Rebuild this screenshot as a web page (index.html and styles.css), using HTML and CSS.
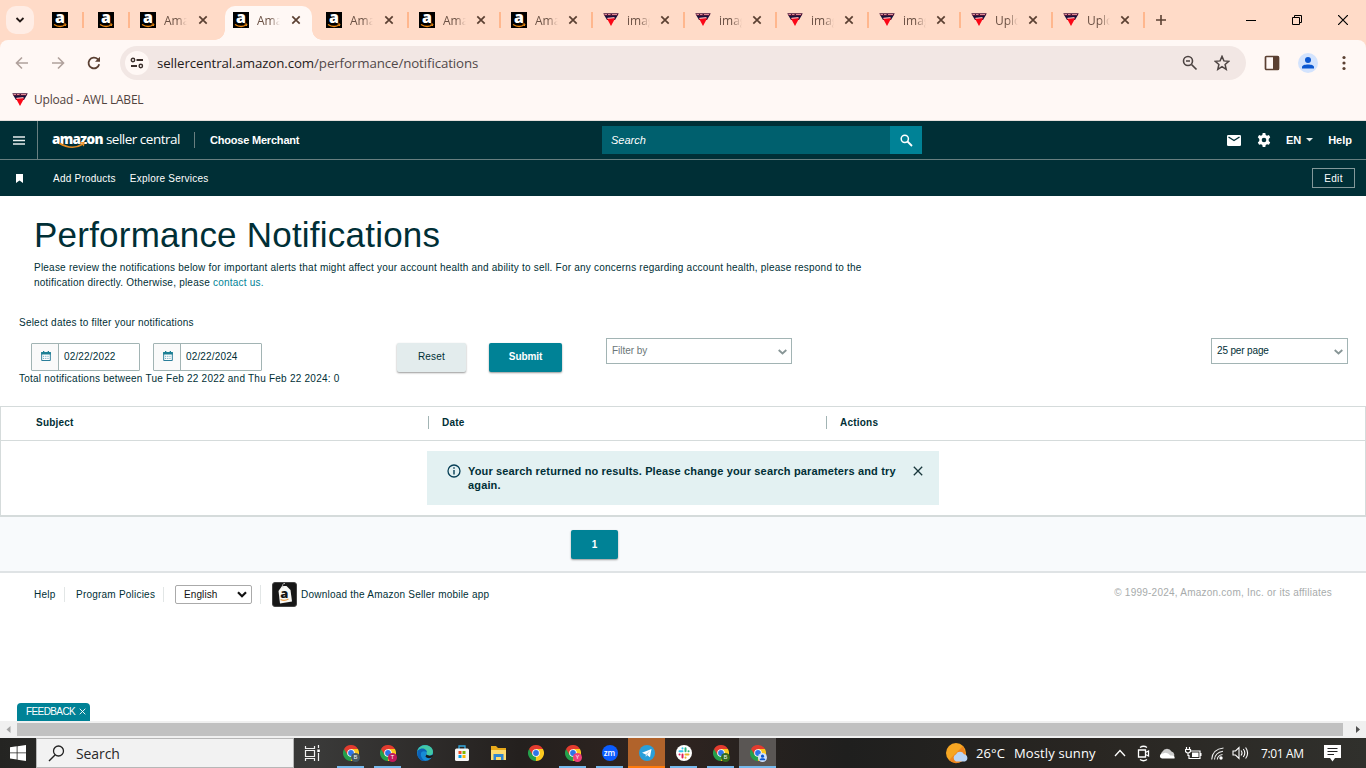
FILE: index.html
```html
<!DOCTYPE html>
<html lang="en">
<head>
<meta charset="utf-8">
<title>Performance Notifications</title>
<link rel="stylesheet" href="styles.css">
</head>
<body>
<svg class="defs" width="0" height="0" aria-hidden="true">
  <symbol id="amz" viewBox="0 0 16 16" overflow="visible"><rect width="16" height="16" fill="#000"/><text x="8" y="11.2" text-anchor="middle" font-family="Open Sans, sans-serif" font-weight="800" font-size="16" fill="#fff">a</text><path d="M2 12.5q6 3.800 11.500.3" fill="none" stroke="#f08a10" stroke-width="1.300"/><path d="M11.500 12h2.500l-.6 2" fill="none" stroke="#f08a10"/></symbol>
  <symbol id="awl" viewBox="0 0 16 16"><path d="M.3 1.300h15.400L14.500 4h-13z" fill="#4b1538"/><path d="M1.500 2.500h2.500M5 2.500h2.500M9 2.500h5" stroke="#e08a96" stroke-width="1"/><path d="M1.700 4h12.600L12 8H4z" fill="#17123c"/><path d="M3.800 6.200h8.400L8 14z" fill="#fb0717"/><path d="M4.500 6.400l7-.8" stroke="#ffb0b2" stroke-width="1.300"/></symbol>
  <symbol id="x" viewBox="0 0 10 10"><path d="M1.300 1.300l7.400 7.400M8.700 1.300L1.300 8.700" fill="none" stroke="currentColor" stroke-width="1.700"/></symbol>
  <symbol id="chrome" viewBox="0 0 16 16"><path d="M8 8L1.070 4A8 8 0 0 0 8 16l3.500-6z" fill="#24a04b"/><path d="M8 8l-.1 8A8 8 0 0 0 14.930 4H8z" fill="#fcc91f"/><path d="M1.070 4A8 8 0 0 1 14.930 4H8L4.600 10z" fill="#e33b2e"/><circle cx="8" cy="8" r="3.800" fill="#fff"/><circle cx="8" cy="8" r="2.900" fill="#2d75e8"/></symbol>
  <symbol id="cal" viewBox="0 0 10 10"><path d="M.7 1.500h8.600v8H.7z" fill="#fff" stroke="#2b7e9a"/><path d="M.2 1h9.600v2.600H.2zM2 0h1.300v2H2zM6.700 0H8v2H6.700z" fill="#1d8095"/><path d="M2 5.300h6.500M2 7.400h6.500" stroke="#6fa9bf" stroke-dasharray="1.200 1"/></symbol>
  <symbol id="chev" viewBox="0 0 9 6"><path d="M.7 1l3.800 3.500L8.300 1" fill="none" stroke="#879596" stroke-width="1.800"/></symbol>
</svg>

<header class="tabs">
  <div class="tab-list-btn"><svg width="10" height="6" viewBox="0 0 10 6"><path d="M1.500 1L5 4.500 8.500 1" fill="none" stroke="#241a17" stroke-width="1.800"/></svg></div>
  <div class="tab pinned"><svg class="fav"><use href="#amz"/></svg></div>
  <div class="tab pinned second"><svg class="fav"><use href="#amz"/></svg></div>
  <div class="tab wide plain"><svg class="fav"><use href="#amz"/></svg><span>Ama</span><svg class="close"><use href="#x"/></svg></div>
  <div class="tab wide plain active"><svg class="fav"><use href="#amz"/></svg><span>Ama</span><svg class="close"><use href="#x"/></svg></div>
  <div class="tab wide"><svg class="fav"><use href="#amz"/></svg><span>Ama</span><svg class="close"><use href="#x"/></svg></div>
  <div class="tab"><svg class="fav"><use href="#amz"/></svg><span>Ama</span><svg class="close"><use href="#x"/></svg></div>
  <div class="tab"><svg class="fav"><use href="#amz"/></svg><span>Ama</span><svg class="close"><use href="#x"/></svg></div>
  <div class="tab"><svg class="fav"><use href="#awl"/></svg><span>imag</span><svg class="close"><use href="#x"/></svg></div>
  <div class="tab"><svg class="fav"><use href="#awl"/></svg><span>imag</span><svg class="close"><use href="#x"/></svg></div>
  <div class="tab"><svg class="fav"><use href="#awl"/></svg><span>imag</span><svg class="close"><use href="#x"/></svg></div>
  <div class="tab"><svg class="fav"><use href="#awl"/></svg><span>imag</span><svg class="close"><use href="#x"/></svg></div>
  <div class="tab"><svg class="fav"><use href="#awl"/></svg><span>Uplo</span><svg class="close"><use href="#x"/></svg></div>
  <div class="tab"><svg class="fav"><use href="#awl"/></svg><span>Uplo</span><svg class="close"><use href="#x"/></svg></div>
  <svg class="plus" width="12" height="12" viewBox="0 0 12 12"><path d="M6 1v10M1 6h10" stroke="#5b4032" stroke-width="1.600"/></svg>
  <div class="win">
    <svg width="10" height="10"><path d="M0 5.500h10" stroke="#000"/></svg>
    <svg width="10" height="10"><path d="M.5 2.500h7v7h-7zM2.500 2.500v-2h7v7h-2" fill="none" stroke="#000"/></svg>
    <svg width="10" height="10"><path d="M0 0l10 10M10 0L0 10" stroke="#000" stroke-width="1.200"/></svg>
  </div>
</header>

<div class="toolbar-back"><div class="toolbar">
  <svg class="nav-ic" width="14" height="14" viewBox="0 0 14 14"><path d="M13 7H2M7 1.500L1.500 7 7 12.500" fill="none" stroke="#b0a19c" stroke-width="1.600"/></svg>
  <svg class="nav-ic" width="14" height="14" viewBox="0 0 14 14"><path d="M1 7h11M7 1.500L12.500 7 7 12.500" fill="none" stroke="#b0a19c" stroke-width="1.600"/></svg>
  <svg class="nav-ic" width="14" height="14" viewBox="0 0 14 14"><path d="M12.200 8.300A5.400 5.400 0 1 1 10.800 3.200L12 4.500" fill="none" stroke="#5b4032" stroke-width="1.800"/><path d="M13 .8v5H8z" fill="#5b4032"/></svg>
  <div class="omnibox">
    <div class="site-info"><svg width="14" height="12" viewBox="0 0 14 12"><path d="M6.500 3H13M1 9h6" stroke="#3b302c" stroke-width="1.800"/><circle cx="3" cy="3" r="1.700" fill="none" stroke="#3b302c" stroke-width="1.400"/><circle cx="10.800" cy="9" r="1.700" fill="none" stroke="#3b302c" stroke-width="1.400"/></svg></div>
    <p class="url"><b>sellercentral.amazon.com</b>/performance/notifications</p>
    <svg class="zoom" width="16" height="16" viewBox="0 0 16 16"><circle cx="6" cy="6" r="4.500" fill="none" stroke="#4d4442" stroke-width="1.600"/><path d="M9.500 9.500l5 5M4 6h4" stroke="#4d4442" stroke-width="1.700"/></svg>
    <svg width="16" height="16" viewBox="0 0 16 16"><path d="M8 1.400l1.900 4.500 4.900.4-3.700 3.200 1.100 4.800L8 11.700l-4.200 2.600 1.100-4.800L1.200 6.300l4.900-.4z" fill="none" stroke="#4d4442" stroke-width="1.500"/></svg>
  </div>
  <svg class="panel" width="16" height="16" viewBox="0 0 16 16"><rect x="1.500" y="1.500" width="13" height="13" rx="1" fill="#fff8f6" stroke="#5b4032" stroke-width="1.700"/><path d="M9 1h5.500v14H9z" fill="#5b4032"/></svg>
  <svg class="avatar" width="20" height="20" viewBox="0 0 20 20"><circle cx="10" cy="10" r="10" fill="#d3e3fd"/><circle cx="10" cy="7" r="3" fill="#0b57d0"/><path d="M4 15.500v-1.600c0-3.300 12-3.300 12 0v1.600z" fill="#0b57d0"/></svg>
  <svg width="4" height="16" viewBox="0 0 4 16"><g fill="#5b4032"><circle cx="2" cy="2.500" r="1.600"/><circle cx="2" cy="8" r="1.600"/><circle cx="2" cy="13.500" r="1.600"/></g></svg>
</div></div>
<div class="bookmarks"><svg class="fav"><use href="#awl"/></svg><span>Upload - AWL LABEL</span></div>

<nav class="sc-top">
  <div class="burger"><svg width="12" height="9" viewBox="0 0 12 9"><path d="M0 1h12M0 4.500h12M0 8h12" stroke="#e8eeee" stroke-width="1.600"/></svg></div>
  <div class="brand"><b>amazon</b><span>seller central</span><svg class="smile" width="30" height="8" viewBox="0 0 30 8"><path d="M1 1q13 8 24 1" fill="none" stroke="#e88b21" stroke-width="1.500"/><path d="M22 .8l4-.2-.6 3.600" fill="none" stroke="#e88b21" stroke-width="1.200"/></svg></div>
  <div class="merchant">Choose Merchant</div>
  <div class="sc-search"><em>Search</em><div class="go"><svg width="13" height="13" viewBox="0 0 13 13"><circle cx="4.800" cy="4.800" r="3.600" fill="none" stroke="#fff" stroke-width="1.500"/><path d="M7.500 7.500l4.500 4.500" stroke="#fff" stroke-width="1.800"/></svg></div></div>
  <div class="sc-right">
    <svg width="14" height="11" viewBox="0 0 14 11"><rect width="14" height="11" rx="1.300" fill="#fff"/><path d="M1.500 2L7 5.500 12.500 2" fill="none" stroke="#002f36" stroke-width="1.400"/></svg>
    <svg class="gear" width="14" height="14" viewBox="0 0 14 14"><path d="M5.700 0h2.600l.4 2 1.300.7 1.900-.7 1.300 2.300L11.700 6v2l1.500 1.500-1.300 2.300-1.900-.6-1.300.8-.4 2H5.700l-.4-2-1.300-.8-1.900.6L.8 9.500 2.300 8V6L.8 4.300 2.100 2l1.900.7L5.300 2z" fill="#fff"/><circle cx="7" cy="7" r="2.300" fill="#002f36"/></svg>
    <span class="lang">EN</span><svg class="caret" width="7" height="4"><path d="M0 0h7L3.500 3.500z" fill="#e8eeee"/></svg>
    <span class="help">Help</span>
  </div>
</nav>
<nav class="sc-sub">
  <svg width="7" height="9" viewBox="0 0 7 9"><path d="M0 0h7v9L3.500 6.500 0 9z" fill="#fff"/></svg>
  <a class="add">Add Products</a><a class="explore">Explore Services</a>
  <button class="edit">Edit</button>
</nav>

<main>
  <section class="intro">
    <h1>Performance Notifications</h1>
    <p>Please review the notifications below for important alerts that might affect your account health and ability to sell. For any concerns regarding account health, please respond to the<br>notification directly. Otherwise, please <a>contact us.</a></p>
  </section>
  <section class="filters">
    <p class="prompt">Select dates to filter your notifications</p>
    <div class="controls">
      <div class="date"><i><svg width="10" height="10"><use href="#cal"/></svg></i><span>02/22/2022</span></div>
      <div class="date"><i><svg width="10" height="10"><use href="#cal"/></svg></i><span>02/22/2024</span></div>
      <button class="btn reset">Reset</button>
      <button class="btn submit">Submit</button>
      <div class="drop filter"><span>Filter by</span><svg width="9" height="6"><use href="#chev"/></svg></div>
      <div class="drop per"><span>25 per page</span><svg width="9" height="6"><use href="#chev"/></svg></div>
    </div>
    <p class="total">Total notifications between Tue Feb 22 2022 and Thu Feb 22 2024: 0</p>
  </section>
  <section class="table">
    <div class="thead"><div>Subject</div><div>Date</div><div>Actions</div></div>
    <div class="tbody">
      <div class="alert">
        <svg width="14" height="14" viewBox="0 0 14 14"><circle cx="7" cy="7" r="6" fill="none" stroke="#073f56" stroke-width="1.300"/><path d="M7 6v4.500M7 3.300v1.500" stroke="#073f56" stroke-width="1.400"/></svg>
        <p>Your search returned no results. Please change your search parameters and try<br>again.</p>
        <svg class="dismiss" width="10" height="10" viewBox="0 0 10 10"><path d="M.8.8l8.400 8.400M9.200.8L.8 9.200" stroke="#19373c" stroke-width="1.300"/></svg>
      </div>
    </div>
  </section>
  <section class="pager"><button>1</button></section>
  <footer>
    <a class="f-help">Help</a><a class="f-pol">Program Policies</a>
    <div class="f-lang"><div class="select"><span>English</span><svg width="10" height="7" viewBox="0 0 10 7"><path d="M1 1.200l4 4 4-4" fill="none" stroke="#111" stroke-width="2.200"/></svg></div></div>
    <svg class="app" width="25" height="25" viewBox="0 0 25 25"><rect x=".5" y=".5" width="24" height="24" rx="2.500" fill="#171717" stroke="#444"/><path d="M6.500 9l3.500-5h4.500l4 4 1.500 11.500-12 2z" fill="#f8f8f5"/><path d="M11 5.500q-1.500-4 2-4" fill="none" stroke="#bbb"/><text x="12.500" y="16" text-anchor="middle" font-family="Open Sans, sans-serif" font-weight="800" font-size="13" fill="#161616">a</text><path d="M8.500 17.500q4 2 8-.5" fill="none" stroke="#eda04a" stroke-width="1.200"/></svg>
    <a class="download">Download the Amazon Seller mobile app</a>
    <small>© 1999-2024, Amazon.com, Inc. or its affiliates</small>
  </footer>
  <div class="feedback">FEEDBACK <svg width="7" height="7" viewBox="0 0 10 10"><path d="M1 1l8 8M9 1L1 9" stroke="#fff" stroke-width="1.300"/></svg></div>
</main>
<div class="scroll"><svg width="17" height="17"><path d="M10.500 5v7L6.500 8.500z" fill="#a3a3a3"/></svg><div></div><svg width="23" height="17"><path d="M13 5v7l4-3.500z" fill="#505050"/></svg></div>

<div class="taskbar">
  <div class="start"><svg width="16" height="16" viewBox="0 0 16 16"><path d="M0 2.300L6.700 1.300v6.200H0zM7.500 1.200L16 0v7.500H7.500zM0 8.300h6.700v6.200L0 13.600zM7.500 8.300H16V16l-8.500-1.300z" fill="#fff"/></svg></div>
  <div class="tsearch"><svg width="17" height="17" viewBox="0 0 17 17"><circle cx="10.500" cy="6" r="5" fill="none" stroke="#222" stroke-width="1.300"/><path d="M7 10L1 16" stroke="#222" stroke-width="1.400"/></svg><span>Search</span></div>
  <div class="apps">
    <div class="ap first"><svg width="17" height="17" viewBox="0 0 17 17"><path d="M1.500 1v2.500h9V1M1.500 16v-2.500h9V16M1.500 5.500h9v6h-9zM14.500 0v3M14.500 8v8" fill="none" stroke="#f1f1f1" stroke-width="1.200"/><path d="M13.300 4.500h2.500V7h-2.500z" fill="#fff"/></svg></div>
    <div class="ap run"><svg class="ch"><use href="#chrome"/></svg><i class="badge slate">B</i></div>
    <div class="ap run"><svg class="ch"><use href="#chrome"/></svg><i class="badge crimson">T</i></div>
    <div class="ap"><svg width="16" height="16" viewBox="0 0 16 16"><circle cx="8" cy="8" r="8" fill="#168bd6"/><path d="M.4 6C2-2 16-1.500 16 7c0 4-5 4-6.500 2.600C11 6 5 2 .4 6z" fill="#42c8a6"/><path d="M1 5.500c4-4 9-1 9 2C7 5 3 6 4 11c1 3 3 4.500 5 5C3 17-1 11 1 5.500z" fill="#0c62b7"/><path d="M9.500 9.600C11 11 15 11 15.500 9.500L16 11c-2 3-6 2.500-7.500.5z" fill="#191919"/></svg></div>
    <div class="ap"><svg width="16" height="16" viewBox="0 0 16 16"><path d="M5 4V1h6v3" fill="none" stroke="#35a9e0" stroke-width="1.300"/><rect x="1" y="3.500" width="14" height="12.500" rx="1.500" fill="#f7f7f7"/><path d="M4.500 6h3v3h-3z" fill="#f04e23"/><path d="M8.500 6h3v3h-3z" fill="#7db700"/><path d="M4.500 10h3v3h-3z" fill="#00a1ed"/><path d="M8.500 10h3v3h-3z" fill="#fdb900"/></svg></div>
    <div class="ap"><svg width="17" height="16" viewBox="0 0 17 16"><path d="M1 1h5l2 2h8v12H1z" fill="#e8a91b"/><path d="M1 5h15v10H1z" fill="#fddc70"/><path d="M3.500 15V9h10v6h-2.500v-3H6v3z" fill="#2f86d1"/></svg></div>
    <div class="ap"><svg class="ch"><use href="#chrome"/></svg></div>
    <div class="ap run"><svg class="ch"><use href="#chrome"/></svg><i class="badge pink">Y</i></div>
    <div class="ap run"><span class="zm">zm</span></div>
    <div class="ap run alerting"><svg width="16" height="16" viewBox="0 0 16 16"><circle cx="8" cy="8" r="8" fill="#2a9fd9"/><path d="M3 7.800l9.500-3.800-1.500 8.300-3-2.200L6.800 12V9.400z" fill="#fff"/><path d="M6.800 9.400L11 5.500 8 10" fill="#a9c9dd"/></svg></div>
    <div class="ap run"><svg width="16" height="16" viewBox="0 0 16 16"><circle cx="8" cy="8" r="8" fill="#fff"/><g fill="none" stroke-width="2" stroke-linecap="round"><path d="M3.500 6.300h3M6.500 3.300v.2" stroke="#36c5f0"/><path d="M9.500 3.300v3M12.500 6.300h.1" stroke="#2eb67d"/><path d="M9.500 9.500h3M9.500 12.600v.1" stroke="#ecb22e"/><path d="M6.500 9.500v3M3.500 9.500h.1" stroke="#e01e5a"/></g></svg></div>
    <div class="ap run"><svg class="ch"><use href="#chrome"/></svg><i class="badge green">B</i></div>
    <div class="ap run current"><svg class="ch"><use href="#chrome"/></svg><i class="badge pale"><svg width="9" height="9" viewBox="0 0 20 20"><circle cx="10" cy="7" r="3.500" fill="#0b57d0"/><path d="M4 16v-2c0-3.300 12-3.300 12 0v2z" fill="#0b57d0"/></svg></i></div>
  </div>
  <div class="weather"><svg width="23" height="21" viewBox="0 0 23 21"><circle cx="10" cy="10" r="10" fill="#f6a623"/><path d="M3 17A10 10 0 0 0 20 12L17 3z" fill="#ee851f"/><path d="M10 18.500a4 4 0 0 1 0-7.300 4.500 4.500 0 0 1 8 0 3.800 3.800 0 0 1 1 7.300z" fill="#b9d4f6"/></svg><span class="temp">26°C</span><span class="cond">Mostly sunny</span></div>
  <div class="tray">
    <svg width="12" height="8" viewBox="0 0 12 8"><path d="M1 7l5-5.500L11 7" fill="none" stroke="#fff" stroke-width="1.300"/></svg>
    <svg class="meet" width="13" height="17" viewBox="0 0 13 17"><path d="M3 2.500q3.500-2.500 7 0M3 14.500q3.500 2.500 7 0M1.500 5h7v7h-7zM8.500 7.500L11.500 6v5l-3-1.500" fill="none" stroke="#fff" stroke-width="1.300"/></svg>
    <svg width="17" height="11" viewBox="0 0 17 11"><path d="M4 9.500a3.500 3.500 0 0 1-.5-6 5 5 0 0 1 9 0A3.500 3.500 0 0 1 13.500 10z" fill="#ccc"/><path d="M3 10.500a2.500 2.500 0 0 1 1-5q4-2 7.500 2 5-.5 4 3z" fill="#fff"/></svg>
    <svg width="17" height="13" viewBox="0 0 17 13"><path d="M6 4h9v7.500H4V8M1.500 0v2.500M4.500 0v2.500M.5 2.500h5v2q-2.500 3-5 0zM3 6v3" fill="none" stroke="#fff" stroke-width="1.200"/><path d="M7 5.500h6.500V10H7zM15 6h1.500v3H15z" fill="#fff"/></svg>
    <svg width="13" height="13" viewBox="0 0 13 13"><g fill="none" stroke="#eee" stroke-width="1.100"><path d="M.7 12.500Q1.500 2 12.500 1"/><path d="M3.500 12.500Q4 5.500 12 4.200"/><path d="M6.300 12.500Q6.500 8.500 11.500 7.500"/></g><circle cx="10" cy="11" r="1.700" fill="#fff"/></svg>
    <svg class="vol" width="17" height="14" viewBox="0 0 17 14"><path d="M1 5h2.500L7 1.500v11L3.500 9H1zM9 4.500q2 2.500 0 5M11.300 3q3 4 0 8M13.600 1.500q4 5.500 0 11" fill="none" stroke="#fff" stroke-width="1.100"/></svg>
  </div>
  <time>7:01 AM</time>
  <svg class="note" width="17" height="17" viewBox="0 0 17 17"><path d="M0 0h17v13h-6l-2.500 3.500L6 13H0z" fill="#fff"/><path d="M3.500 3.500h10M3.500 6.500h10M3.500 9.500h6.500" stroke="#222"/></svg>
</div>
</body>
</html>
```
FILE: styles.css
```css
* { box-sizing: border-box; }
body {
  margin: 0; width: 1366px; height: 768px; overflow: hidden;
  display: flex; flex-direction: column;
  font-family: "Liberation Sans", Arial, sans-serif; font-size: 10px; color: #002f36; background: #fff;
}
p, h1 { margin: 0; }
svg { display: block; flex: none; }
button { font: inherit; padding: 0; }
.defs { position: absolute; }
.fav { width: 16px; height: 16px; }

/* Browser tab strip */
.tabs { height: 40px; flex: none; display: flex; background: #ffdbc8; font: 12px "Open Sans", sans-serif; color: #6b5144; }
.tab-list-btn { width: 28px; height: 28px; margin: 6px 7px 0 6px; border-radius: 10px; background: #ffede5; display: flex; align-items: center; justify-content: center; }
.tab { position: relative; width: 92px; height: 40px; padding-left: 11px; display: flex; align-items: center; flex: none; }
.tab::after { content: ""; position: absolute; right: -1px; top: 12px; width: 2px; height: 16px; background: #ffb78e; }
.tab.wide { width: 93px; }
.tab.plain::after { display: none; }
.tab.pinned { width: 42px; }
.tab.pinned.second { width: 46px; padding-left: 15px; }
.tab span { width: 23px; margin-left: 8px; white-space: nowrap; -webkit-mask-image: linear-gradient(90deg, #000 55%, transparent); mask-image: linear-gradient(90deg, #000 55%, transparent); }
.close { width: 10px; height: 10px; margin-left: 10px; color: #5b4032; }
.wide .close { margin-left: 11px; }
.active { z-index: 1; }
.active::before { content: ""; position: absolute; z-index: -1; left: 3px; top: 6px; width: 87px; height: 34px; border-radius: 10px 10px 0 0; background: #fff8f5; }
.tab.active::after { display: block; z-index: -2; left: -7px; right: auto; top: 30px; width: 107px; height: 10px; background: radial-gradient(circle at 0 0, transparent 9.5px, #fff8f5 10px) 0 0 / 10px 10px no-repeat, radial-gradient(circle at 100% 0, transparent 9.5px, #fff8f5 10px) 100% 0 / 10px 10px no-repeat; }
.plus { margin: 14px 0 0 11px; }
.win { margin: 15px 18px 0 auto; display: flex; gap: 36px; }

/* Address bar */
.toolbar-back { height: 46px; flex: none; background: #ffdbc8; }
.toolbar { height: 46px; display: flex; align-items: center; background: #fff8f5; padding-left: 15px; border-radius: 8px 8px 0 0; }
.nav-ic { margin-right: 22px; }
.omnibox { width: 1126px; height: 34px; margin-left: -3px; border-radius: 17px; background: #f2e7e4; display: flex; align-items: center; padding: 0 16px 0 5px; }
.site-info { width: 24px; height: 24px; border-radius: 50%; background: #fff8f5; display: flex; align-items: center; justify-content: center; }
.url { font: 13.300px "Open Sans", sans-serif; color: #51494a; margin-left: 8px; letter-spacing: -.1px; }
.url b { font-weight: 400; color: #1f1a19; }
.zoom { margin: 0 16px 0 auto; }
.panel { margin: 0 18px; }
.avatar { margin-right: 24px; }
.bookmarks { height: 35px; flex: none; background: #fff8f5; border-bottom: 1px solid #e5dedb; display: flex; align-items: center; padding: 0 0 7px 12px; gap: 6px; font: 12px "Open Sans", sans-serif; color: #51433e; }
.bookmarks span { letter-spacing: -.2px; }

/* Seller header */
.sc-top { height: 39px; flex: none; background: #002f36; border-bottom: 1px solid #687f80; color: #fff; display: flex; align-items: center; font-weight: 700; font-size: 11px; }
.burger { width: 38px; height: 38px; border-right: 1px solid #687f80; display: flex; align-items: center; justify-content: center; }
.brand { position: relative; width: 157px; height: 16px; padding: 0 0 3px 14px; border-right: 1px solid #687f80; display: flex; align-items: center; gap: 3px; font-family: "Open Sans", sans-serif; font-size: 13.500px; white-space: nowrap; }
.brand b { letter-spacing: -.65px; }
.brand span { font-weight: 400; letter-spacing: -.5px; }
.smile { position: absolute; left: 20px; top: 10px; }
.merchant { width: 407px; padding-left: 15px; letter-spacing: -.2px; }
.sc-search { width: 320px; height: 28px; background: #00606e; display: flex; align-items: center; justify-content: space-between; padding-left: 9px; }
.sc-search em { font-weight: 400; font-size: 11px; }
.go { width: 32px; height: 28px; background: #008296; display: flex; align-items: center; justify-content: center; }
.sc-right { margin-left: auto; padding-right: 14px; display: flex; align-items: center; }
.gear { margin: 0 15px 0 16px; }
.caret { margin: 0 15px 0 5px; }
.sc-sub { height: 36px; flex: none; background: #002f36; color: #fff; display: flex; align-items: center; padding: 0 11px 0 16px; letter-spacing: .23px; }
.add { margin-left: 30px; }
.explore { margin-left: 14px; }
.edit { width: 43px; height: 20px; margin-left: auto; background: none; border: 1px solid #83989a; color: #fff; letter-spacing: .3px; }

/* Page content */
main { position: relative; flex: none; height: 525px; letter-spacing: .22px; }
.intro { height: 120px; padding: 18px 0 0 34px; }
h1 { font-size: 35px; line-height: 42px; font-weight: 400; letter-spacing: .22px; }
.intro p { line-height: 15px; margin-top: 4px; white-space: nowrap; }
.intro p a { color: #008296; }
.filters { height: 90px; padding-left: 19px; }
.prompt { height: 22px; line-height: 14px; }
.controls { height: 34px; display: flex; align-items: flex-start; padding-left: 12px; }
.date { width: 109px; height: 28px; margin: 5px 13px 0 0; border: 1px solid #a2b4b4; border-radius: 1px; display: flex; align-items: center; }
.date i { width: 27px; height: 26px; border-right: 1px solid #a2b4b4; background: #fafafa; display: flex; align-items: center; justify-content: center; padding: 0 0 3px 2px; }
.date span { padding: 0 0 1px 5px; letter-spacing: .15px; }
.btn { border: 0; height: 29px; margin-top: 5px; border-radius: 2px; box-shadow: 0 1px 2px #999; letter-spacing: .2px; padding-bottom: 2px; }
.reset { width: 69px; margin-left: 122px; background: #e3eced; color: #002f36; }
.submit { width: 73px; margin-left: 23px; background: #008296; color: #fff; font-weight: 700; letter-spacing: -.1px; }
.drop { height: 26px; border: 1px solid #a2b4b4; display: flex; align-items: center; justify-content: space-between; padding: 0 4px 0 5px; }
.drop span { padding-bottom: 1px; }
.drop svg { margin-top: 2px; }
.filter { width: 186px; margin-left: 44px; color: #6b7778; letter-spacing: -.05px; }
.per { width: 137px; margin: 0 18px 0 auto; letter-spacing: -.15px; }
.total { line-height: 14px; letter-spacing: .235px; }
.table { height: 111px; border: 1px solid #d5dbdb; border-bottom-width: 2px; }
.thead { height: 34px; border-bottom: 1px solid #d5dbdb; display: flex; align-items: center; font-weight: 700; letter-spacing: .22px; padding: 0 0 2px 35px; }
.thead div { width: 398px; }
.thead div:first-child { width: 392px; }
.thead div + div { height: 13px; line-height: 13px; border-left: 1px solid #a2b4b4; padding-left: 13px; }
.tbody { display: flex; justify-content: center; padding-top: 10px; }
.alert { width: 512px; height: 54px; background: #e3f1f2; display: flex; align-items: flex-start; padding: 13px 16px 0 20px; }
.alert p { font-size: 11px; font-weight: 700; line-height: 14px; letter-spacing: .15px; margin-left: 7px; white-space: nowrap; }
.dismiss { margin: 2px 0 0 auto; }
.pager { height: 56px; background: #f8fafc; border-bottom: 2px solid #dfe3e5; padding: 13px 0 0 571px; }
.pager button { display: block; width: 47px; height: 29px; border: 0; border-radius: 2px; background: #008296; color: #fff; font-weight: 700; box-shadow: 0 1px 2px #999; }
footer { height: 43px; display: flex; align-items: center; padding-left: 34px; }
.f-help { width: 31px; border-right: 1px solid #e2e6e6; line-height: 15px; }
.f-pol { width: 99px; padding-left: 11px; border-right: 1px solid #e2e6e6; line-height: 15px; }
.f-lang { width: 97px; padding-left: 11px; border-right: 1px solid #e2e6e6; height: 19px; }
.select { width: 77px; height: 19px; border: 1px solid #aaa; border-radius: 2px; display: flex; align-items: center; justify-content: space-between; padding: 0 4px 0 8px; color: #111; letter-spacing: .1px; }
.app { margin: 0 4px 0 11px; }
footer small { margin: 0 34px 4px auto; font-size: 10px; color: #a7abab; letter-spacing: .235px; }
.feedback { position: absolute; left: 17px; top: 507px; width: 73px; height: 18px; background: #008296; color: #fff; border-radius: 4px 4px 0 0; display: flex; align-items: center; gap: 4px; padding: 0 0 1px 9px; font-size: 10px; letter-spacing: -.6px; }
.scroll { height: 17px; flex: none; background: #f0f0f0; display: flex; align-items: center; }
.scroll div { flex: 1; height: 13px; background: #c1c1c1; }

/* Windows taskbar */
.taskbar { height: 30px; flex: none; background: linear-gradient(90deg, #242422, #3a3a39 23%, #24201e 38%, #302420 48%, #1f1f1e 62%, #292622 80%, #30302c); color: #fff; display: flex; align-items: center; font-family: "Open Sans", sans-serif; }
.start { width: 36px; padding-left: 10px; }
.tsearch { width: 258px; height: 30px; background: #f2f2f2; border: 1px solid #b7b7b7; display: flex; align-items: center; gap: 11px; padding-left: 11px; color: #282828; font-size: 14px; }
.tsearch span { letter-spacing: -.1px; }
.apps { display: flex; width: 482px; }
.ap { position: relative; width: 37px; height: 30px; display: flex; align-items: center; justify-content: center; flex: none; }
.ap.first { width: 38px; padding-right: 1px; }
.run::after { content: ""; position: absolute; left: 5px; right: 5px; bottom: 0; height: 2px; background: #76b9ed; }
.ch { width: 16px; height: 16px; }
.badge { position: absolute; left: 19px; top: 15px; width: 9px; height: 9px; border-radius: 50%; font: 6px/9px "Open Sans", sans-serif; text-align: center; }
.slate { background: #455a64; } .crimson { background: #c2185b; } .pink { background: #ec407a; } .green { background: #33691e; }
.pale { background: #cfe0fb; }
.zm { width: 16px; height: 16px; border-radius: 50%; background: #0b5cff; font: 600 8px/15px "Open Sans", sans-serif; text-align: center; }
.alerting { background: #b1632b; }
.alerting::after { left: 0; right: 0; background: #ff7a0c; }
.current { background: #5a5654; }
.current::after { left: 0; right: 0; }
.weather { display: flex; align-items: center; margin-left: 170px; font-size: 13px; white-space: nowrap; width: 168px; flex: none; }
.temp { margin: 0 9px 0 7px; letter-spacing: .1px; }
.cond { letter-spacing: .12px; }
.tray { display: flex; align-items: center; gap: 9px; }
.tray .meet { margin-left: 2px; }
.tray .vol { margin-left: -1px; }
time { font-size: 12px; margin-left: 12px; letter-spacing: -.35px; white-space: nowrap; }
.note { margin: 1px 25px 0 auto; }
```
